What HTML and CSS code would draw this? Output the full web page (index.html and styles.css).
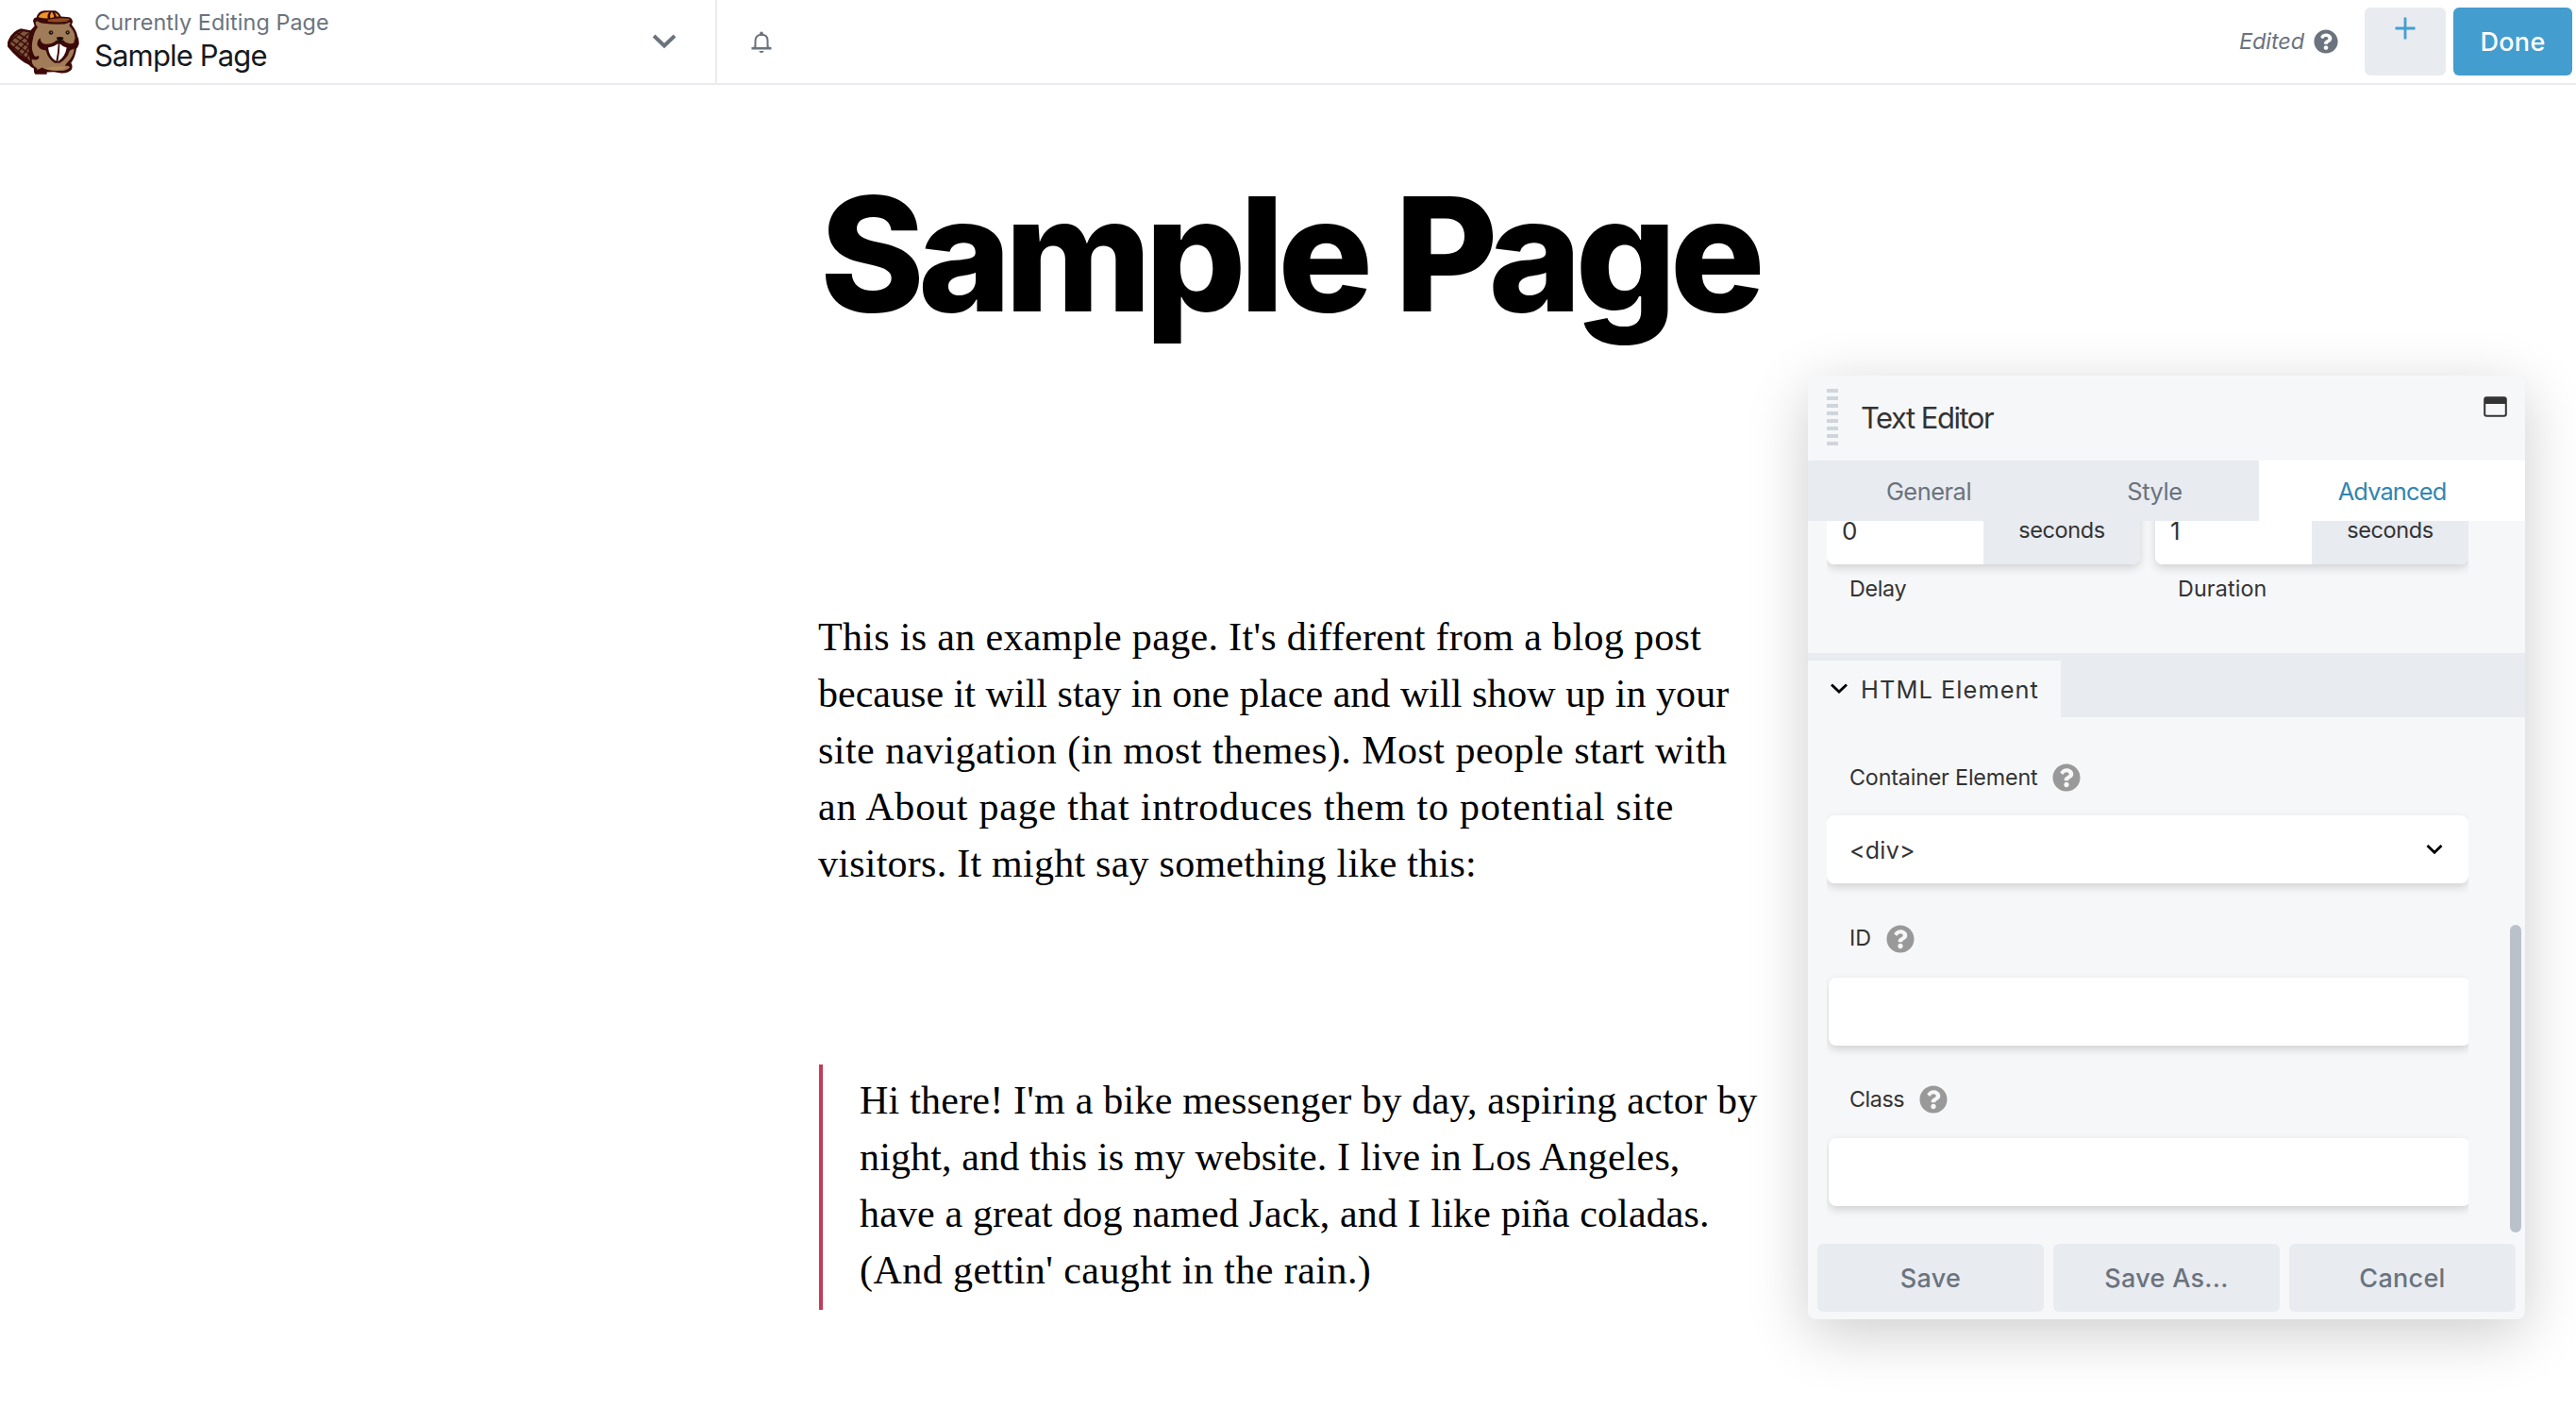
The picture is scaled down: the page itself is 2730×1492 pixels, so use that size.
FILE: index.html
```html
<!DOCTYPE html>
<html lang="en">
<head>
<meta charset="utf-8">
<title>Sample Page</title>
<link rel="stylesheet" href="styles.css">
</head>
<body>
<svg class="defs" width="0" height="0" aria-hidden="true">
  <symbol id="help" viewBox="0 0 512 512">
    <path fill="currentColor" d="M504 256c0 137-111 248-248 248S8 393 8 256 119 8 256 8s248 111 248 248zM262.700 90c-54.500 0-89.300 23-116.500 63.800-3.500 5.300-2.400 12.400 2.700 16.300l34.700 26.300c5.200 3.900 12.600 3 16.700-2.100 17.900-22.700 30.100-35.800 57.300-35.800 20.400 0 45.700 13.100 45.700 33 0 15-12.400 22.700-32.500 34C247.100 238.500 216 255 216 296v4c0 6.600 5.400 12 12 12h56c6.600 0 12-5.400 12-12v-1.300c0-28.800 84-30 84-107.700 0-58.700-60.900-101-117.300-101zM256 338c-25.400 0-46 20.600-46 46s20.600 46 46 46 46-20.600 46-46-20.600-46-46-46z"/>
  </symbol>
</svg>

<header class="topbar">
  <svg class="logo" viewBox="24 28 228 206" aria-label="Logo">
    <path fill="#3b0a08" d="M66 88 L97 94 L110 80 L105 64 Q106 54 116 53 Q120 34 140 31 L176 31 Q190 38 194 50 L220 52 Q231 56 231 68 Q229 72 228 76 Q244 96 246 112 Q252 120 251 138 Q248 148 243 152 Q240 178 226 198 Q232 206 228 218 Q216 232 194 230 L172 226 L149 227 V234 H112 Q106 226 108 216 Q98 212 92 204 Q60 190 24 146 Q22 132 28 122 Q40 96 66 88Z"/>
    <path fill="#7d573c" d="M68 96 L92 101 Q88 120 91 142 Q89 168 96 190 Q62 176 33 140 Q38 110 68 96Z"/>
    <path fill="none" stroke="#3b0a08" stroke-width="4.500" d="M76 92 L34 128M90 104 L42 150M92 124 L54 166M92 146 L68 178M94 166 L80 190M50 100 L96 128M40 110 L94 148M32 124 L94 170M30 138 L90 188"/>
    <path fill="#a17c58" d="M113 68 Q118 62 124 68 Q140 76 206 74 L222 68 Q226 74 219 78 Q238 98 238 114 Q240 120 236 126 Q238 138 222 136 Q206 134 203 126 L179 126 Q168 138 146 138 Q128 136 128 118 Q120 122 118 138 Q122 152 136 156 L146 158 Q152 184 174 198 L190 198 Q214 184 222 158 L236 152 Q234 178 214 196 L206 206 Q222 206 222 212 Q210 224 190 222 Q150 224 134 212 L118 220 Q120 214 114 212 Q100 204 101 186 Q118 192 124 182 Q124 172 118 176 Q110 182 106 168 Q98 148 104 124 Q108 100 120 84 Q112 78 113 68Z"/>
    <path fill="#c3965f" opacity=".6" d="M142 214 Q170 206 210 210 Q204 220 188 220 Q164 220 142 214Z"/>
    <path fill="#ef9529" d="M122 52 Q128 38 142 37 L157 36 Q149 44 152 56 Q136 56 122 52Z M163 36 Q170 38 172 52 L160 55 Q158 44 163 36Z M173 37 Q184 40 188 49 L180 51 Q178 42 173 37Z"/>
    <path fill="#8f4a1f" d="M152 60 Q190 52 222 57 Q222 62 212 66 Q180 70 152 66Z"/>
    <path fill="#fff" d="M153 149 Q170 147 185 136 Q184 166 178 192 Q156 178 153 149Z M190 136 Q200 146 212 149 Q208 178 184 193 Q190 166 190 136Z"/>
    <path fill="#15100e" d="M179 117 Q190 112 202 117 Q203 124 193 128 L191 134 H188 V128 Q180 124 179 117Z"/>
    <circle fill="#23140f" cx="162" cy="101" r="7"/><circle fill="#23140f" cx="215" cy="101" r="6.500"/>
    <circle fill="#9aa" cx="163" cy="100" r="2"/><circle fill="#9aa" cx="215" cy="100" r="2"/>
  </svg>
  <div class="page-name">
    <div class="caption">Currently Editing Page</div>
    <div class="name">Sample Page</div>
  </div>
  <svg class="chevron-lg" viewBox="0 0 26 16"><path d="M2 2 L13 12.500 L24 2"/></svg>
  <div class="notify">
    <svg class="bell" viewBox="0 0 22 24">
      <path fill="none" stroke="currentColor" stroke-width="2" d="M4.500 17.500V10C4.500 6 7 3.800 11 3.800S17.500 6 17.500 10V17.500"/>
      <path fill="currentColor" d="M9 4 A2 3.400 0 0 1 13 4V5H9ZM3.600 14.500 V17H18.400V14.500L19.500 17H21.500V19.500H.5V17H2.500ZM8.300 21H13.700Q13.200 23.100 11 23.100T8.300 21Z"/>
    </svg>
  </div>
  <span class="edited">Edited</span>
  <svg class="help help-dark"><use href="#help"/></svg>
  <button class="btn-plus" aria-label="Add"><svg viewBox="0 0 22 24"><path d="M11 .5V23.500M.5 12H21.500"/></svg></button>
  <button class="btn-done">Done</button>
</header>

<main class="article">
  <h1>Sample Page</h1>
  <p class="copy">
    <span class="line l1">This is an example page. It's different from a blog post</span>
    <span class="line l2">because it will stay in one place and will show up in your</span>
    <span class="line l3">site navigation (in most themes). Most people start with</span>
    <span class="line l4">an About page that introduces them to potential site</span>
    <span class="line l5">visitors. It might say something like this:</span>
  </p>
  <blockquote class="copy">
    <span class="line q1">Hi there! I'm a bike messenger by day, aspiring actor by</span>
    <span class="line q2">night, and this is my website. I live in Los Angeles,</span>
    <span class="line q3">have a great dog named Jack, and I like piña coladas.</span>
    <span class="line q4">(And gettin' caught in the rain.)</span>
  </blockquote>
</main>

<section class="panel">
  <div class="panel-head">
    <div class="grip"></div>
    <div class="panel-title">Text Editor</div>
    <svg class="window" viewBox="0 0 25 22"><rect x="1.200" y="1.200" width="22.600" height="19.600" rx="2" fill="none" stroke="currentColor" stroke-width="2"/><path fill="currentColor" d="M1 2H24V8H1Z"/></svg>
  </div>
  <nav class="tabs">
    <a class="tab general">General</a>
    <a class="tab style">Style</a>
    <a class="tab advanced">Advanced</a>
  </nav>
  <div class="panel-body">
    <div class="units">
      <div class="unit"><span class="value">0</span><span class="suffix">seconds</span></div>
      <div class="unit"><span class="value">1</span><span class="suffix">seconds</span></div>
    </div>
    <div class="unit-labels"><span class="delay">Delay</span><span class="duration">Duration</span></div>
    <div class="section-bar">
      <div class="section-tab">
        <svg class="chevron-sm" viewBox="0 0 20 12"><path d="M2 1.500 L10 9 L18 1.500"/></svg>
        <span>HTML Element</span>
      </div>
    </div>
    <div class="label first"><span class="t-container">Container Element</span><svg class="help"><use href="#help"/></svg></div>
    <div class="field"><div class="box select"><span>&lt;div&gt;</span><svg class="chevron-sm select-arrow" viewBox="0 0 20 12"><path d="M2.500 2 L10 9.200 L17.500 2"/></svg></div></div>
    <div class="label"><span class="t-id">ID</span><svg class="help"><use href="#help"/></svg></div>
    <div class="field"><div class="box input"></div></div>
    <div class="label last"><span class="t-class">Class</span><svg class="help"><use href="#help"/></svg></div>
    <div class="field"><div class="box input"></div></div>
    <div class="scroll-thumb"></div>
  </div>
  <footer class="actions">
    <button>Save</button>
    <button>Save As...</button>
    <button>Cancel</button>
  </footer>
</section>
</body>
</html>
```
FILE: styles.css
```css
* { box-sizing: border-box; }

body {
  margin: 0;
  height: 1492px;
  overflow: hidden;
  background: #fff;
  color: #333;
  font-family: Inter, "Liberation Sans", sans-serif;
}

svg { display: block; flex: none; }
.defs { position: absolute; }
button { border: 0; padding: 0; font: inherit; }

/* Top bar */
.topbar {
  display: flex;
  height: 90px;
  border-bottom: 2px solid #ebecf1;
  color: #6b737e;
}
.logo { width: 76px; height: 69px; margin: 9.500px 0 0 8px; }
.page-name { width: 607px; padding: 9.500px 0 0 16px; }
.caption { font-size: 23.300px; line-height: 28px; letter-spacing: .11px; }
.name { margin-top: 2px; font-size: 31px; line-height: 38px; letter-spacing: -.85px; color: #16191e; }
.chevron-lg { width: 26px; height: 16px; margin-top: 36px; }
.chevron-lg path { fill: none; stroke: currentColor; stroke-width: 4; }
.notify { margin-left: 41px; padding: 33px 0 0 36px; border-left: 2px solid #ebecf1; }
.bell { width: 22px; height: 24px; }
.edited {
  margin-left: auto;
  font-size: 23.500px;
  font-style: italic;
  line-height: 88px;
  letter-spacing: -.1px;
}
.help { width: 30px; height: 30px; margin-left: 16px; color: #999; }
.help-dark { width: 26px; height: 26px; margin: 31px 28px 0 10px; color: #6b737e; }
.btn-plus {
  display: flex;
  justify-content: center;
  width: 86px;
  height: 72px;
  margin-top: 8px;
  padding-top: 10px;
  border-radius: 6px;
  background: #e8ebf0;
  color: #439fd0;
}
.btn-plus svg { width: 22px; height: 24px; }
.btn-plus path { fill: none; stroke: currentColor; stroke-width: 2.800; }
.btn-done {
  width: 126px;
  height: 72px;
  margin: 8px 4px 0 8px;
  border-radius: 6px;
  background: #439dce;
  color: #fff;
  font-size: 27px;
  font-weight: 500;
  letter-spacing: .32px;
}

/* Page content */
.article { width: 1000px; margin-left: 867px; padding-top: 95px; color: #000; }
h1 {
  margin: 0 0 292px 2px;
  font-size: 168px;
  font-weight: 800;
  line-height: 168px;
  letter-spacing: -6.980px;
  white-space: nowrap;
}
.copy {
  margin: 0 0 183px;
  font: 42px/60px "Liberation Serif", serif;
}
blockquote.copy {
  width: 1000px;
  height: 260px;
  margin: 0 0 0 1px;
  padding: 8px 0 0 39px;
  border-left: 4px solid #c23b5a;
}
.line { display: block; white-space: nowrap; }
.l1 { letter-spacing: .33px; }
.l2 { letter-spacing: .03px; }
.l3 { letter-spacing: .48px; }
.l4 { letter-spacing: .8px; }
.l5 { letter-spacing: .25px; }
.q1 { letter-spacing: .22px; }
.q2 { letter-spacing: .14px; }
.q3 { letter-spacing: .14px; }
.q4 { letter-spacing: .44px; }

/* Floating settings panel */
.panel {
  position: absolute;
  left: 1916px;
  top: 398px;
  display: flex;
  flex-direction: column;
  width: 760px;
  height: 1000px;
  border-radius: 8px;
  background: #f6f7f9;
  box-shadow: 0 15px 64px rgba(0, 0, 0, .2);
}
.panel-head { display: flex; height: 90px; padding: 14px 19px 0 20px; }
.grip {
  width: 12px;
  height: 60px;
  background: repeating-linear-gradient(#cfd5dc 0 4px, transparent 4px 8px);
}
.panel-title { margin-left: 24px; font-size: 31px; line-height: 62px; letter-spacing: -1.500px; }
.window { width: 25px; height: 22px; margin: 8px 0 0 auto; }

.tabs { display: flex; height: 64px; font-size: 25.400px; line-height: 65px; text-align: center; color: #6b737e; }
.tab { background: #e8ebf0; }
.general { width: 257px; padding-right: 1px; letter-spacing: -.48px; }
.style { width: 221px; letter-spacing: -.41px; }
.advanced { flex: 1; background: #fff; color: #3285b0; letter-spacing: -.84px; }

.panel-body { position: relative; height: 766px; overflow: hidden; }
.units {
  display: flex;
  gap: 16px;
  width: 680px;
  margin: -26px 0 0 20px;
  clip-path: inset(0 0 -20px 0);
}
.unit {
  display: flex;
  width: 332px;
  height: 72px;
  border-radius: 8px;
  overflow: hidden;
  box-shadow: 0 4px 10px rgba(0, 0, 0, .15);
  line-height: 72px;
}
.value { width: 166px; padding-left: 16px; background: #fff; font-size: 26px; line-height: 74px; }
.suffix { width: 166px; background: #e8ebf0; font-size: 23.500px; letter-spacing: -.42px; text-align: center; }
.unit-labels { display: flex; margin: 12px 0 0 44px; height: 82px; font-size: 23.300px; line-height: 28px; }
.delay { width: 348px; letter-spacing: -.32px; }
.duration { letter-spacing: .12px; }

.section-bar { height: 68px; padding-top: 8px; background: #e8ebf0; }
.section-tab {
  display: flex;
  align-items: center;
  width: 268px;
  height: 60px;
  padding-left: 23px;
  background: #f6f7f9;
  font-size: 25.400px;
  letter-spacing: 1.060px;
  white-space: nowrap;
}
.section-tab span { margin-left: 13px; padding-top: 2px; line-height: 62px; }
.chevron-sm { width: 20px; height: 12px; }
.chevron-sm path { fill: none; stroke: #000; stroke-width: 2.800; }

.label { display: flex; align-items: center; height: 30px; margin: 43.500px 0 41.500px 44px; font-size: 23.300px; line-height: 28px; }
.label.first { margin: 49px 0 25px; padding-left: 44px; }
.label.last { margin: 42px 0 41px 44px; }
.label span { position: relative; top: -.5px; }
.t-container { letter-spacing: -.18px; }
.t-id { letter-spacing: 0; }
.t-class { letter-spacing: -.45px; }

.field { width: 680px; margin-left: 20px; clip-path: inset(-20px 0 -20px 0); }
.box {
  height: 72px;
  border-radius: 8px;
  background: #fff;
  box-shadow: 0 4px 10px rgba(0, 0, 0, .15);
}
.input { width: 680px; margin: -15px 0 0 2px; }
.select { display: flex; align-items: center; justify-content: space-between; padding: 0 26px 0 24px; font-size: 25px; line-height: 72px; letter-spacing: .26px; }
.select span { padding-top: 1px; }

.scroll-thumb {
  position: absolute;
  left: 744px;
  top: 428px;
  width: 12px;
  height: 326px;
  border-radius: 6px;
  background: #bbc1cb;
}

.actions { display: flex; gap: 10px; padding: 0 10px; }
.actions button {
  flex: 1;
  height: 72px;
  border-radius: 6px;
  background: #e8ebf0;
  color: #6b737e;
  font-size: 27px;
  font-weight: 500;
  letter-spacing: .3px;
}
```
